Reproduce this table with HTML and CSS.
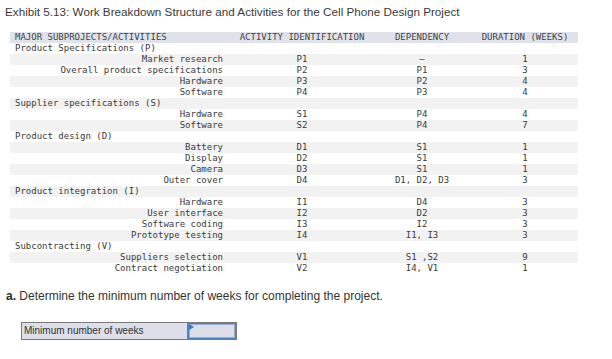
FILE: index.html
```html
<!DOCTYPE html>
<html>
<head>
<meta charset="utf-8">
<link rel="stylesheet" href="styles.css">
</head>
<body>
<div class="title">Exhibit 5.13: Work Breakdown Structure and Activities for the Cell Phone Design Project</div>
<div class="wbs">
  <div class="row head"><span class="grp">MAJOR SUBPROJECTS/ACTIVITIES</span><span>ACTIVITY IDENTIFICATION</span><span>DEPENDENCY</span><span>DURATION (WEEKS)</span></div>
  <div class="row"><span class="grp">Product Specifications (P)</span><span></span><span></span><span></span></div>
  <div class="row alt"><span class="act">Market research</span><span>P1</span><span>–</span><span>1</span></div>
  <div class="row"><span class="act">Overall product specifications</span><span>P2</span><span>P1</span><span>3</span></div>
  <div class="row alt"><span class="act">Hardware</span><span>P3</span><span>P2</span><span>4</span></div>
  <div class="row"><span class="act">Software</span><span>P4</span><span>P3</span><span>4</span></div>
  <div class="row alt"><span class="grp">Supplier specifications (S)</span><span></span><span></span><span></span></div>
  <div class="row"><span class="act">Hardware</span><span>S1</span><span>P4</span><span>4</span></div>
  <div class="row alt"><span class="act">Software</span><span>S2</span><span>P4</span><span>7</span></div>
  <div class="row"><span class="grp">Product design (D)</span><span></span><span></span><span></span></div>
  <div class="row alt"><span class="act">Battery</span><span>D1</span><span>S1</span><span>1</span></div>
  <div class="row"><span class="act">Display</span><span>D2</span><span>S1</span><span>1</span></div>
  <div class="row alt"><span class="act">Camera</span><span>D3</span><span>S1</span><span>1</span></div>
  <div class="row"><span class="act">Outer cover</span><span>D4</span><span>D1, D2, D3</span><span>3</span></div>
  <div class="row alt"><span class="grp">Product integration (I)</span><span></span><span></span><span></span></div>
  <div class="row"><span class="act">Hardware</span><span>I1</span><span>D4</span><span>3</span></div>
  <div class="row alt"><span class="act">User interface</span><span>I2</span><span>D2</span><span>3</span></div>
  <div class="row"><span class="act">Software coding</span><span>I3</span><span>I2</span><span>3</span></div>
  <div class="row alt"><span class="act">Prototype testing</span><span>I4</span><span>I1, I3</span><span>3</span></div>
  <div class="row"><span class="grp">Subcontracting (V)</span><span></span><span></span><span></span></div>
  <div class="row alt"><span class="act">Suppliers selection</span><span>V1</span><span>S1 ,S2</span><span>9</span></div>
  <div class="row"><span class="act">Contract negotiation</span><span>V2</span><span>I4, V1</span><span>1</span></div>
</div>
<p class="question"><b>a.</b> Determine the minimum number of weeks for completing the project.</p>
<div class="answer">
  <div class="label">Minimum number of weeks</div>
  <div class="input"><span class="flag"></span></div>
</div>
</body>
</html>
```
FILE: styles.css
```css
html, body {
  margin: 0;
  padding: 0;
  background: #ffffff;
}
body {
  font-family: "Liberation Sans", Arial, sans-serif;
  color: #333333;
}
.title {
  font-size: 11.7px;
  line-height: 14px;
  padding: 5px 0 0 5px;
  color: #3a3a3a;
}
.wbs {
  margin: 13px 0 0 10px;
  width: 568px;
  font-family: "DejaVu Sans Mono", "Liberation Mono", monospace;
  font-size: 9px;
  color: #3a3a3a;
}
.row {
  display: grid;
  grid-template-columns: 222px 140px 100px 106px;
  align-items: center;
  height: 11px;
  line-height: 11px;
  white-space: nowrap;
}
.row > span {
  text-align: center;
}
.row.head {
  background: #dfe2ea;
  color: #444;
}
.row.alt {
  background: #f2f2f2;
}
.row > span.grp {
  text-align: left;
  padding-left: 5px;
}
.row > span.act {
  text-align: right;
  padding-right: 9px;
}
.question {
  margin: 15px 0 0 6px;
  font-size: 12px;
  line-height: 14px;
  color: #333;
}
.question b {
  color: #2a2a2a;
}
.answer {
  display: flex;
  margin: 19px 0 0 21px;
  height: 18px;
}
.label {
  width: 163px;
  background: #dcdfe9;
  border: 1.5px solid #7b7b7b;
  border-right: none;
  font-size: 10px;
  line-height: 15px;
  padding-left: 2px;
  color: #333;
}
.input {
  position: relative;
  width: 48px;
  background: #dcdfe9;
  border: 1.5px solid #7b7b7b;
  box-shadow: inset 0 0 0 1.5px #4f82c4;
}
.flag {
  position: absolute;
  left: 1px;
  top: 1px;
  width: 0;
  height: 0;
  border-top: 3px solid transparent;
  border-bottom: 3px solid transparent;
  border-left: 5px solid #3f74c0;
}
```
